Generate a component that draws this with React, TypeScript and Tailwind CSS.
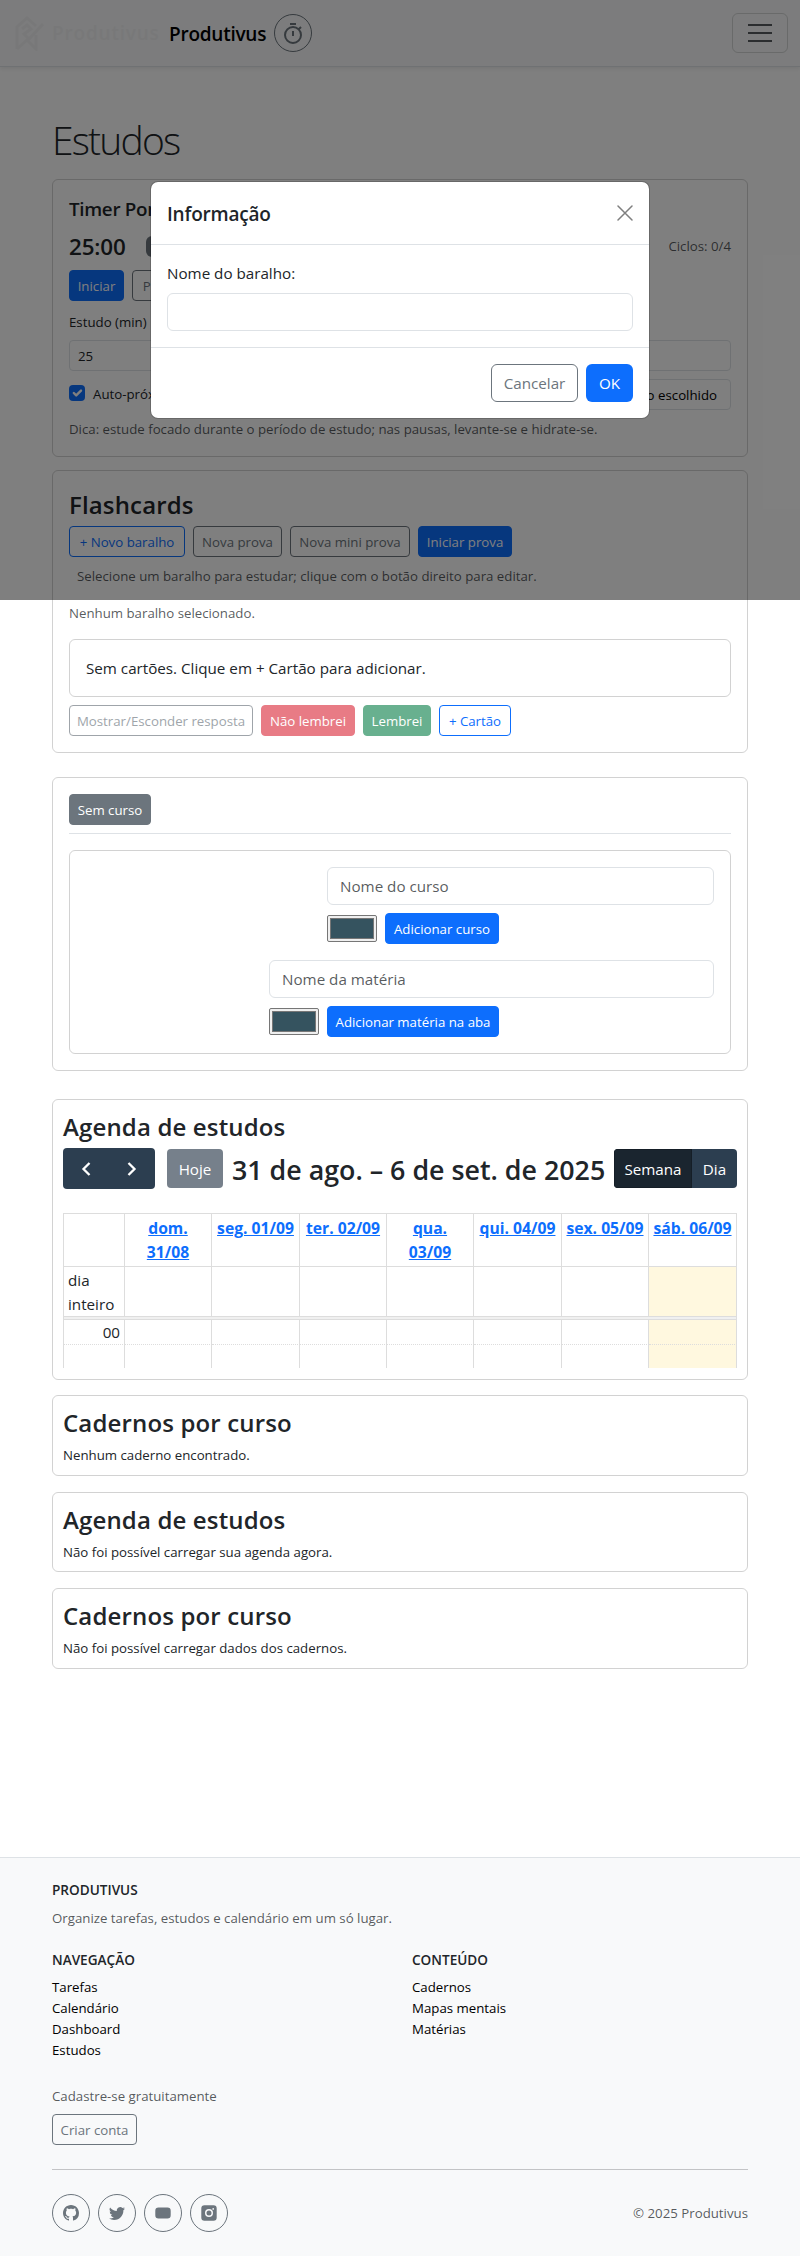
import type { ReactNode } from "react";

const cx = (...parts: (string | undefined)[]) => parts.filter(Boolean).join(" ");

const sizes = {
  xs: "text-[13.25px] leading-[21px]",
  base: "text-[15.2px] leading-6",
};

function Button({ tone, className, children }: { tone: string; className?: string; children: ReactNode }) {
  return (
    <button
      className={cx(
        "flex h-[31px] shrink-0 items-center justify-center whitespace-nowrap rounded-[4px] border pt-px",
        sizes.xs,
        tone,
        className,
      )}
    >
      {children}
    </button>
  );
}

const tones = {
  primary: "border-[#0d6efd] bg-[#0d6efd] text-white",
  outlinePrimary: "border-[#0d6efd] text-[#0d6efd]",
  outlineSecondary: "border-[#6c757d] text-[#6c757d]",
  secondary: "border-[#6c757d] bg-[#6c757d] text-white",
  danger: "border-[#dc3545] bg-[#dc3545] text-white opacity-65",
  success: "border-[#198754] bg-[#198754] text-white opacity-65",
};

function Card({ className, children }: { className?: string; children: ReactNode }) {
  return <section className={cx("rounded-[6px] border border-black/[.175]", className)}>{children}</section>;
}

function Heading({ children }: { children: ReactNode }) {
  return <h2 className="text-[24px] font-semibold leading-[29px] tracking-[0.15px]">{children}</h2>;
}

function Swatch() {
  return (
    <span className="flex h-[27px] w-[50px] shrink-0 rounded-[2px] border border-[#767676] bg-[#efefef] p-[2px]">
      <span className="flex-1 border border-[#777] bg-[#35535f]" />
    </span>
  );
}

function Navbar() {
  return (
    <header className="flex h-[67px] items-center border-b border-[#dee2e6] bg-[#f8f9fa] pl-[14px] pr-3 shadow-[0_2px_4px_rgba(0,0,0,0.075)]">
      <svg className="h-9 w-[30px]" viewBox="0 0 30 36" fill="none" stroke="#f1f1f2" strokeWidth="3">
        <path d="M3 34V12L13 3l9 8M3 34l10-9 9 9V20M8 14l5-4 4 4-7 5 5 5L29 9" />
      </svg>
      <span className="ml-2 w-[117px] text-[19px] font-semibold tracking-[0.8px] text-[#f1f1f2]">Produtivus</span>
      <span className="w-[105px] whitespace-nowrap pt-0.5 text-[19px] font-semibold tracking-[-0.25px] text-black">Produtivus</span>
      <span className="flex size-[38px] items-center justify-center rounded-full border border-[#6c757d] text-[#6c757d]">
        <svg width="20" height="22" viewBox="0 0 20 22" fill="none" stroke="currentColor" strokeWidth="2">
          <circle cx="10" cy="13" r="8" />
          <path d="M7 2h6M10 9v5M15.5 7.5 18 5" />
        </svg>
      </span>
      <button className="ml-auto flex h-10 w-14 items-center justify-center rounded-[6px] border border-black/15">
        <svg width="24" height="20" viewBox="0 0 24 20" stroke="#212529" strokeOpacity=".75" strokeWidth="2">
          <path d="M0 2h24M0 10h24M0 18h24" />
        </svg>
      </button>
    </header>
  );
}

function TimerCard() {
  return (
    <Card className="mt-[15px] h-[278px] px-4 pt-[17px]">
      <h2 className="text-[18.8px] font-semibold leading-6 tracking-[-0.3px]">Timer Pomodoro</h2>
      <div className="mt-[7px] flex h-[37px] items-center">
        <span className="w-[77px] text-[22.4px] font-semibold leading-9 tracking-[-0.15px]">25:00</span>
        <span className="flex h-[21px] items-center rounded-[6px] bg-[#6c757d] px-2 text-[12px] font-bold text-white">Estudo</span>
        <span className={cx("ml-auto text-[#212529]/75", sizes.xs)}>Ciclos: 0/4</span>
      </div>
      <div className="mt-[5px] flex gap-2">
        <Button tone={tones.primary} className="w-[55px]">Iniciar</Button>
        <Button tone={tones.outlineSecondary} className="w-[64px]">Pausar</Button>
        <Button tone={tones.outlineSecondary} className="w-[64px]">Zerar</Button>
      </div>
      <div className={cx("mt-[11px] grid grid-cols-3 gap-2 whitespace-nowrap", sizes.xs)}>
        {[["Estudo (min)", "25"], ["Pausa curta (min)", "5"], ["Pausa longa (min)", "15"]].map(([label, value]) => (
          <label key={label}>
            {label}
            <span className="mt-[7px] flex h-[31px] items-center rounded-[4px] border border-[#dee2e6] pl-2 pt-px">{value}</span>
          </label>
        ))}
      </div>
      <div className={cx("mt-2 flex h-[31px] items-center", sizes.xs)}>
        <span className="mb-[3px] flex size-4 items-center justify-center rounded-[4px] bg-[#0d6efd]">
          <svg width="16" height="16" viewBox="0 0 20 20" fill="none" stroke="#fff" strokeWidth="3" strokeLinecap="round" strokeLinejoin="round">
            <path d="m6 10 3 3 6-6" />
          </svg>
        </span>
        <span className="ml-2">Auto-próximo</span>
        <Button tone="border-[#dee2e6] text-black" className="ml-auto px-[13px]">Usar tempo escolhido</Button>
      </div>
      <p className={cx("mt-[9px] text-[#212529]/75", sizes.xs)}>
        Dica: estude focado durante o período de estudo; nas pausas, levante-se e hidrate-se.
      </p>
    </Card>
  );
}

function FlashcardsCard() {
  return (
    <Card className="mt-[13px] h-[283px] px-4 pt-[19px]">
      <Heading>Flashcards</Heading>
      <div className="mt-[7px] flex gap-2">
        <Button tone={tones.outlinePrimary} className="w-[116px]">+ Novo baralho</Button>
        <Button tone={tones.outlineSecondary} className="w-[89px]">Nova prova</Button>
        <Button tone={tones.outlineSecondary} className="w-[120px]">Nova mini prova</Button>
        <Button tone={tones.primary} className="w-[94px]">Iniciar prova</Button>
      </div>
      <p className={cx("mt-[9px] pl-2 text-[#212529]/75", sizes.xs)}>
        Selecione um baralho para estudar; clique com o botão direito para editar.
      </p>
      <p className={cx("mt-4 text-[#212529]/75", sizes.xs)}>Nenhum baralho selecionado.</p>
      <Card className="mt-[15px] h-[58px] px-4 py-4">
        <p className={sizes.base}>Sem cartões. Clique em + Cartão para adicionar.</p>
      </Card>
      <div className="mt-2 flex gap-2">
        <Button tone={tones.outlineSecondary} className="w-[184px] opacity-65">Mostrar/Esconder resposta</Button>
        <Button tone={tones.danger} className="w-[94px]">Não lembrei</Button>
        <Button tone={tones.success} className="w-[68px]">Lembrei</Button>
        <Button tone={tones.outlinePrimary} className="w-[72px]">+ Cartão</Button>
      </div>
    </Card>
  );
}

function NameForm({ placeholder, action, width, buttonWidth }: { placeholder: string; action: string; width: string; buttonWidth: string }) {
  return (
    <div className={cx("ml-auto", width)}>
      <div className={cx("flex h-[38px] items-center rounded-[6px] border border-[#dee2e6] pl-3 text-[#212529]/75", sizes.base)}>
        {placeholder}
      </div>
      <div className="mt-2 flex items-center gap-2">
        <Swatch />
        <Button tone={tones.primary} className={buttonWidth}>{action}</Button>
      </div>
    </div>
  );
}

function CoursesCard() {
  return (
    <Card className="mt-6 h-[294px] p-4">
      <div className="border-b border-[#dee2e6] pb-2">
        <Button tone={tones.secondary} className="w-[82px]">Sem curso</Button>
      </div>
      <Card className="mt-4 flex h-[204px] flex-col gap-4 p-4">
        <NameForm placeholder="Nome do curso" action="Adicionar curso" width="w-[387px]" buttonWidth="w-[114px]" />
        <NameForm placeholder="Nome da matéria" action="Adicionar matéria na aba" width="w-[445px]" buttonWidth="w-[172px]" />
      </Card>
    </Card>
  );
}

const days = ["dom. 31/08", "seg. 01/09", "ter. 02/09", "qua. 03/09", "qui. 04/09", "sex. 05/09", "sáb. 06/09"];
const columns = "grid grid-cols-[61px_87px_88px_87px_87px_88px_87px_88px]";
const cell = "border-r border-[#ddd]";

function dayCell(i: number) {
  return cx(cell, i === 6 ? "bg-[#fff8df]" : undefined);
}

function CalendarCard() {
  return (
    <Card className="mt-7 h-[281px] px-[10px] pt-3">
      <Heading>Agenda de estudos</Heading>
      <div className="mt-[7px] flex h-[41px] items-center">
        <div className="flex h-[41px] w-[92px] items-center justify-center gap-5 rounded-[4px] bg-[#2c3e50] text-white">
          {["M14.500 6l-6 6 6 6", "M9.500 6l6 6-6 6"].map((d) => (
            <svg key={d} width="24" height="24" viewBox="0 0 24 24" fill="none" stroke="currentColor" strokeWidth="2.3">
              <path d={d} />
            </svg>
          ))}
        </div>
        <button className={cx("ml-3 h-[39px] w-14 rounded-[4px] bg-[#76808b] text-white", sizes.base)}>Hoje</button>
        <h3 className="ml-[9px] w-[374px] whitespace-nowrap pt-0.5 text-[26.8px] font-semibold leading-8">
          31 de ago. – 6 de set. de 2025
        </h3>
        <div className={cx("ml-auto flex h-[39px] shrink-0 overflow-hidden rounded-[4px] text-white", sizes.base)}>
          <button className="w-[78px] border border-[#151e27] bg-[#1a252f]">Semana</button>
          <button className="w-[45px] bg-[#2c3e50]">Dia</button>
        </div>
      </div>
      <div className={cx("mt-6 h-[155px] w-[674px] border-l border-t border-[#ddd]", sizes.base)}>
        <div className={cx(columns, "h-[53px] border-b border-[#ddd] text-center text-[15.7px] font-bold text-[#0d6efd]")}>
          <div className={cell} />
          {days.map((day, i) => (
            <div key={day} className={cx(cell, "flex justify-center pt-[2px]")}>
              <span className="underline">{i % 3 === 0 && i < 6 ? <>{day.split(" ")[0]}<br />{day.split(" ")[1]}</> : <span className="whitespace-nowrap">{day}</span>}</span>
            </div>
          ))}
        </div>
        <div className={cx(columns, "h-[50px] border-b border-[#ddd]")}>
          <div className={cx(cell, "pl-1 pt-px")}>dia<br />inteiro</div>
          {days.map((day, i) => <div key={day} className={dayCell(i)} />)}
        </div>
        <div className="h-[3px] border-b border-r border-[#ddd] bg-[#f0f0f0]" />
        <div className={cx(columns, "h-[25px]")}>
          <div className={cx(cell, "border-b border-b-[#ddd] pr-1 text-right [border-bottom-style:dotted]")}>00</div>
          {days.map((day, i) => <div key={day} className={cx(dayCell(i), "border-b [border-bottom-style:dotted]")} />)}
        </div>
        <div className={cx(columns, "h-[23px]")}>
          <div className={cell} />
          {days.map((day, i) => <div key={day} className={dayCell(i)} />)}
        </div>
      </div>
    </Card>
  );
}

function MessageCard({ title, text, height }: { title: string; text: string; height: string }) {
  return (
    <Card className={cx("px-[10px] pt-3", height)}>
      <Heading>{title}</Heading>
      <p className={cx("mt-2", sizes.xs)}>{text}</p>
    </Card>
  );
}

function FooterLinks({ title, links }: { title: string; links: string[] }) {
  return (
    <div>
      <h4 className="text-[13.6px] font-semibold leading-[21px]">{title}</h4>
      <ul className="mt-[7px] text-black">
        {links.map((link) => <li key={link}>{link}</li>)}
      </ul>
    </div>
  );
}

const socials = [
  "M8 0C3.58 0 0 3.58 0 8c0 3.54 2.29 6.53 5.47 7.59.4.07.55-.17.55-.38 0-.19-.01-.82-.01-1.49-2.01.37-2.53-.49-2.69-.94-.09-.23-.48-.94-.82-1.13-.28-.15-.68-.52-.01-.53.63-.01 1.08.58 1.23.82.72 1.21 1.87.87 2.33.66.07-.52.28-.87.51-1.07-1.78-.2-3.64-.89-3.64-3.95 0-.87.31-1.59.82-2.15-.08-.2-.36-1.02.08-2.12 0 0 .67-.21 2.2.82.64-.18 1.32-.27 2-.27s1.36.09 2 .27c1.53-1.04 2.2-.82 2.2-.82.44 1.1.16 1.92.08 2.12.51.56.82 1.27.82 2.15 0 3.07-1.87 3.75-3.65 3.95.29.25.54.73.54 1.48 0 1.07-.01 1.93-.01 2.2 0 .21.15.46.55.38A8.01 8.01 0 0 0 16 8c0-4.42-3.58-8-8-8",
  "M5.03 15c6.04 0 9.34-5 9.34-9.33q.01-.22-.01-.42A6.7 6.7 0 0 0 16 3.54a6.6 6.6 0 0 1-1.89.52 3.3 3.3 0 0 0 1.45-1.82 6.5 6.5 0 0 1-2.08.79A3.29 3.29 0 0 0 7.88 6.03 9.32 9.32 0 0 1 1.11 2.6a3.29 3.29 0 0 0 1.02 4.38A3.3 3.3 0 0 1 .64 6.58v.04a3.29 3.29 0 0 0 2.63 3.22 3.2 3.2 0 0 1-1.48.06 3.29 3.29 0 0 0 3.07 2.28A6.6 6.6 0 0 1 0 13.53 9.3 9.3 0 0 0 5.03 15",
  "M3.5 2.5h9A3.2 3.2 0 0 1 15.7 5.7v4.6a3.2 3.2 0 0 1-3.2 3.2h-9A3.2 3.2 0 0 1 .3 10.3V5.7A3.2 3.2 0 0 1 3.5 2.5",
  "M3.5.3h9A3.2 3.2 0 0 1 15.7 3.5v9a3.2 3.2 0 0 1-3.2 3.2h-9A3.2 3.2 0 0 1 .3 12.5v-9A3.2 3.2 0 0 1 3.5.3M8 4a4 4 0 1 0 0 8 4 4 0 0 0 0-8m0 1.5a2.5 2.5 0 1 1 0 5 2.5 2.5 0 0 1 0-5m4.2-2.4a.85.85 0 1 0 0 1.7.85.85 0 0 0 0-1.7",
];

function Footer() {
  return (
    <footer className={cx("mt-[188px] h-[399px] border-t border-[#dee2e6] bg-[#f8f9fa] px-[52px] pt-[21px]", sizes.xs)}>
      <h4 className="text-[13.6px] font-semibold leading-[21px]">PRODUTIVUS</h4>
      <p className="mt-2 text-[#212529]/75">Organize tarefas, estudos e calendário em um só lugar.</p>
      <div className="mt-5 grid h-[137px] grid-cols-[360px_1fr]">
        <FooterLinks title="NAVEGAÇÃO" links={["Tarefas", "Calendário", "Dashboard", "Estudos"]} />
        <FooterLinks title="CONTEÚDO" links={["Cadernos", "Mapas mentais", "Matérias"]} />
      </div>
      <p className="text-[#212529]/75">Cadastre-se gratuitamente</p>
      <Button tone={tones.outlineSecondary} className="mt-[7px] w-[85px]">Criar conta</Button>
      <div className="mt-6 flex items-center gap-2 border-t border-[#c3c4c6] pt-6">
        {socials.map((d) => (
          <span key={d} className="flex size-[38px] items-center justify-center rounded-full border border-[#6c757d]">
            <svg width="16" height="16" viewBox="0 0 16 16" fill="#6c757d" fillRule="evenodd"><path d={d} /></svg>
          </span>
        ))}
        <span className="ml-auto text-[#212529]/75">© 2025 Produtivus</span>
      </div>
    </footer>
  );
}

function PromptModal() {
  return (
    <div className="absolute inset-x-0 top-0 flex h-[600px] justify-center bg-black/50 pt-[181px]">
      <div className="flex h-[238px] w-[500px] flex-col rounded-lg border border-black/[.175] bg-white bg-clip-padding">
        <div className="flex h-[63px] items-center justify-between border-b border-[#dee2e6] px-4">
          <h5 className="pt-0.5 text-[19px] font-semibold leading-[30px] tracking-[-0.2px]">Informação</h5>
          <svg width="16" height="16" viewBox="0 0 16 16" stroke="#000" strokeOpacity=".5" strokeWidth="1.5" strokeLinecap="round">
            <path d="m1 1 14 14M15 1 1 15" />
          </svg>
        </div>
        <div className={cx("h-[103px] border-b border-[#dee2e6] px-4 pt-4", sizes.base)}>
          <label>Nome do baralho:</label>
          <div className="mt-2 h-[38px] rounded-[6px] border border-[#dee2e6]" />
        </div>
        <div className={cx("flex justify-end gap-2 px-4 pt-4", sizes.base)}>
          <button className="h-[38px] w-[87px] rounded-[6px] border border-[#6c757d] text-[#6c757d]">Cancelar</button>
          <button className="h-[38px] w-[47px] rounded-[6px] bg-[#0d6efd] text-white">OK</button>
        </div>
      </div>
    </div>
  );
}

export default function App() {
  return (
    <div className="relative min-h-[2256px] bg-white font-['Open_Sans','Noto_Sans',sans-serif] text-[#212529]">
      <Navbar />
      <main className="px-[52px] pt-[49px]">
        <h1 className="text-[39px] font-light leading-[48px] tracking-[-1.8px]">Estudos</h1>
        <TimerCard />
        <FlashcardsCard />
        <CoursesCard />
        <CalendarCard />
        <div className="mt-[15px] flex flex-col gap-4">
          <MessageCard title="Cadernos por curso" text="Nenhum caderno encontrado." height="h-[81px]" />
          <MessageCard title="Agenda de estudos" text="Não foi possível carregar sua agenda agora." height="h-[80px]" />
          <MessageCard title="Cadernos por curso" text="Não foi possível carregar dados dos cadernos." height="h-[81px]" />
        </div>
      </main>
      <Footer />
      <PromptModal />
    </div>
  );
}
